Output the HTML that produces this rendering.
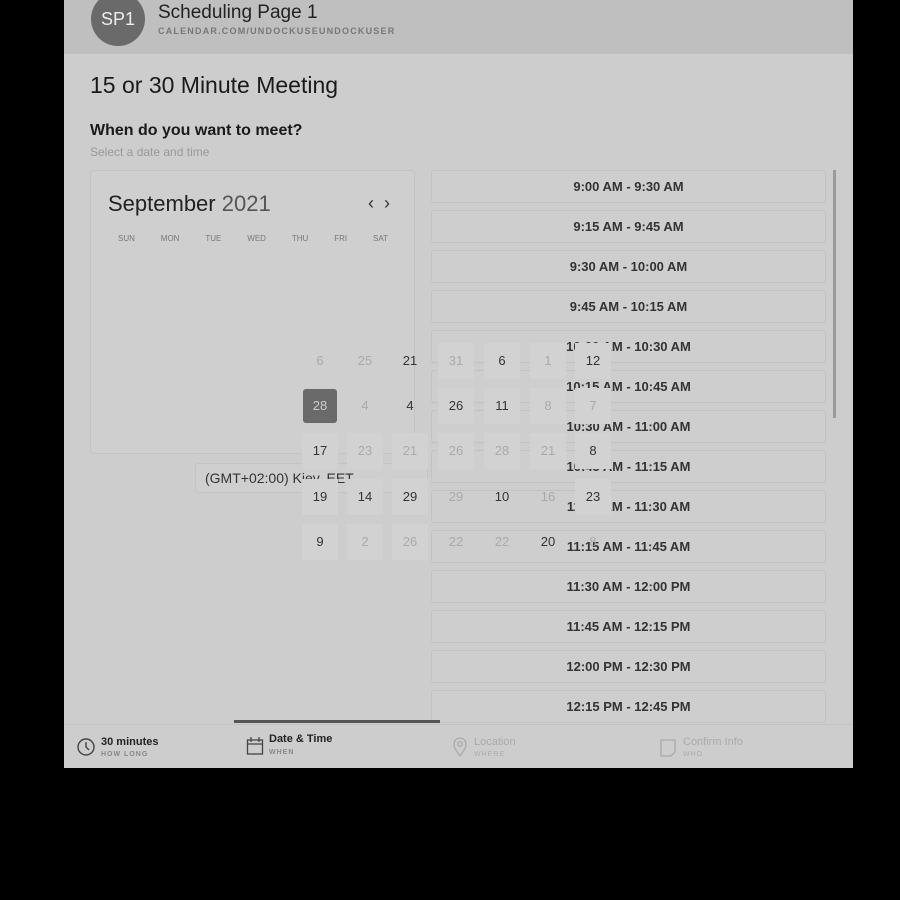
<!DOCTYPE html>
<html><head><style>
body{margin:0;width:900px;height:900px;background:#000;font-family:"Liberation Sans",sans-serif;position:relative;overflow:hidden}
.a{position:absolute}
#page{left:64px;top:0;width:789px;height:767px;background:#cdcdcd}
#hdr{left:64px;top:0;width:789px;height:54px;background:#bfbfbf}
.slot{position:absolute;left:431px;width:393px;height:31px;border:1px solid #c2c2c2;border-radius:3px;background:#cecece;text-align:center;line-height:31px;font-size:13px;font-weight:bold;color:#333}
.d{position:absolute;width:36px;height:36px;line-height:36px;text-align:center;font-size:13px;background:#d2d2d2;color:#333}
.g{color:#aaa}
</style></head><body>
<div class="a" id="page"></div>
<div class="a" id="hdr"></div>
<div class="a" style="left:91px;top:-8px;width:54px;height:54px;border-radius:50%;background:#6a6a6a;color:#eee;font-size:18px;text-align:center;line-height:54px">SP1</div>
<div class="a" style="left:158px;top:2px;font-size:19px;color:#222">Scheduling Page 1</div>
<div class="a" style="left:158px;top:26px;font-size:9px;font-weight:bold;letter-spacing:1.2px;color:#777">CALENDAR.COM/UNDOCKUSEUNDOCKUSER</div>
<div class="a" style="left:90px;top:72px;font-size:23px;color:#1a1a1a">15 or 30 Minute Meeting</div>
<div class="a" style="left:90px;top:122px;font-size:16px;font-weight:bold;color:#1a1a1a">When do you want to meet?</div>
<div class="a" style="left:90px;top:145px;font-size:12px;color:#999">Select a date and time</div>
<div class="a" style="left:90px;top:170px;width:323px;height:282px;border:1px solid #c4c4c4;border-radius:4px;background:#cfcfcf"></div>
<div class="a" style="left:108px;top:191px;font-size:22px;color:#222">September <span style="color:#555">2021</span></div>
<div class="a" style="left:368px;top:193px;font-size:18px;color:#333">‹ &nbsp;›</div>
<div class="a" style="left:108px;top:234px;font-size:8px;color:#777;width:290px;display:flex;justify-content:space-between;padding:0 10px;box-sizing:border-box"><span>SUN</span><span>MON</span><span>TUE</span><span>WED</span><span>THU</span><span>FRI</span><span>SAT</span></div>
<div class="a" style="left:195px;top:463px;width:222px;height:28px;border:1px solid #c4c4c4;border-radius:3px;font-size:14px;line-height:28px;padding-left:9px;color:#333;background:#cfcfcf">(GMT+02:00) Kiev, EET</div>
<div class="a" style="left:833px;top:170px;width:3px;height:248px;background:#9a9a9a"></div>
<div class="slot" style="top:170px">9:00 AM - 9:30 AM</div>
<div class="slot" style="top:210px">9:15 AM - 9:45 AM</div>
<div class="slot" style="top:250px">9:30 AM - 10:00 AM</div>
<div class="slot" style="top:290px">9:45 AM - 10:15 AM</div>
<div class="slot" style="top:330px">10:00 AM - 10:30 AM</div>
<div class="slot" style="top:370px">10:15 AM - 10:45 AM</div>
<div class="slot" style="top:410px">10:30 AM - 11:00 AM</div>
<div class="slot" style="top:450px">10:45 AM - 11:15 AM</div>
<div class="slot" style="top:490px">11:00 AM - 11:30 AM</div>
<div class="slot" style="top:530px">11:15 AM - 11:45 AM</div>
<div class="slot" style="top:570px">11:30 AM - 12:00 PM</div>
<div class="slot" style="top:610px">11:45 AM - 12:15 PM</div>
<div class="slot" style="top:650px">12:00 PM - 12:30 PM</div>
<div class="slot" style="top:690px">12:15 PM - 12:45 PM</div>
<div class="d g" style="left:302px;top:343px;background:none">6</div>
<div class="d g" style="left:347px;top:343px;background:none">25</div>
<div class="d" style="left:392px;top:343px;background:none">21</div>
<div class="d g" style="left:438px;top:343px">31</div>
<div class="d" style="left:484px;top:343px">6</div>
<div class="d g" style="left:530px;top:343px">1</div>
<div class="d" style="left:575px;top:343px">12</div>
<div class="d" style="left:303px;top:389px;width:34px;height:34px;line-height:34px;background:#6a6a6a;color:#ccc;border-radius:3px">28</div>
<div class="d g" style="left:347px;top:388px;background:none">4</div>
<div class="d" style="left:392px;top:388px;background:none">4</div>
<div class="d" style="left:438px;top:388px">26</div>
<div class="d" style="left:484px;top:388px">11</div>
<div class="d g" style="left:530px;top:388px">8</div>
<div class="d g" style="left:575px;top:388px">7</div>
<div class="d" style="left:302px;top:433px">17</div>
<div class="d g" style="left:347px;top:433px">23</div>
<div class="d g" style="left:392px;top:433px">21</div>
<div class="d g" style="left:438px;top:433px">26</div>
<div class="d g" style="left:484px;top:433px">28</div>
<div class="d g" style="left:530px;top:433px">21</div>
<div class="d" style="left:575px;top:433px">8</div>
<div class="d" style="left:302px;top:479px">19</div>
<div class="d" style="left:347px;top:479px">14</div>
<div class="d" style="left:392px;top:479px">29</div>
<div class="d g" style="left:438px;top:479px;background:none">29</div>
<div class="d" style="left:484px;top:479px;background:none">10</div>
<div class="d g" style="left:530px;top:479px;background:none">16</div>
<div class="d" style="left:575px;top:479px">23</div>
<div class="d" style="left:302px;top:524px">9</div>
<div class="d g" style="left:347px;top:524px">2</div>
<div class="d g" style="left:392px;top:524px">26</div>
<div class="d g" style="left:438px;top:524px;background:none">22</div>
<div class="d g" style="left:484px;top:524px;background:none">22</div>
<div class="d" style="left:530px;top:524px;background:none">20</div>
<div class="d g" style="left:575px;top:524px;background:none">8</div>
<div class="a" style="left:64px;top:724px;width:789px;height:43px;background:#cdcdcd;border-top:1px solid #c2c2c2"></div>
<div class="a" style="left:234px;top:720px;width:206px;height:3px;background:#555"></div>
<svg class="a" style="left:76px;top:737px" width="20" height="20" viewBox="0 0 20 20"><circle cx="10" cy="10" r="8" fill="none" stroke="#444" stroke-width="1.4"/><path d="M10 5v5l3 3" fill="none" stroke="#444" stroke-width="1.4"/></svg>
<div class="a" style="left:101px;top:736px;font-size:11px;font-weight:bold;color:#222">30 minutes</div>
<div class="a" style="left:101px;top:751px;font-size:7px;font-weight:bold;letter-spacing:1px;color:#888">HOW LONG</div>
<svg class="a" style="left:246px;top:736px" width="18" height="20" viewBox="0 0 18 20"><rect x="1.5" y="4" width="15" height="14" fill="none" stroke="#444" stroke-width="1.3"/><path d="M1.5 8h15M5 1v5M13 1v5" stroke="#444" stroke-width="1.3"/></svg>
<div class="a" style="left:269px;top:733px;font-size:11px;font-weight:bold;color:#222">Date &amp; Time</div>
<div class="a" style="left:269px;top:749px;font-size:7px;font-weight:bold;letter-spacing:1px;color:#888">WHEN</div>
<svg class="a" style="left:452px;top:737px" width="16" height="20" viewBox="0 0 16 20"><path d="M8 19C3 12 2 10 2 7a6 6 0 0 1 12 0c0 3-1 5-6 12z" fill="none" stroke="#aaa" stroke-width="1.3"/><circle cx="8" cy="7" r="2.3" fill="none" stroke="#aaa" stroke-width="1.3"/></svg>
<div class="a" style="left:474px;top:736px;font-size:11px;color:#aaa">Location</div>
<div class="a" style="left:474px;top:751px;font-size:7px;letter-spacing:1px;color:#aaa">WHERE</div>
<svg class="a" style="left:659px;top:738px" width="18" height="20" viewBox="0 0 18 20"><path d="M2 2h14v12l-4 4H2z" fill="none" stroke="#aaa" stroke-width="1.3"/></svg>
<div class="a" style="left:683px;top:736px;font-size:11px;color:#aaa">Confirm Info</div>
<div class="a" style="left:683px;top:751px;font-size:7px;letter-spacing:1px;color:#aaa">WHO</div>
</body></html>
